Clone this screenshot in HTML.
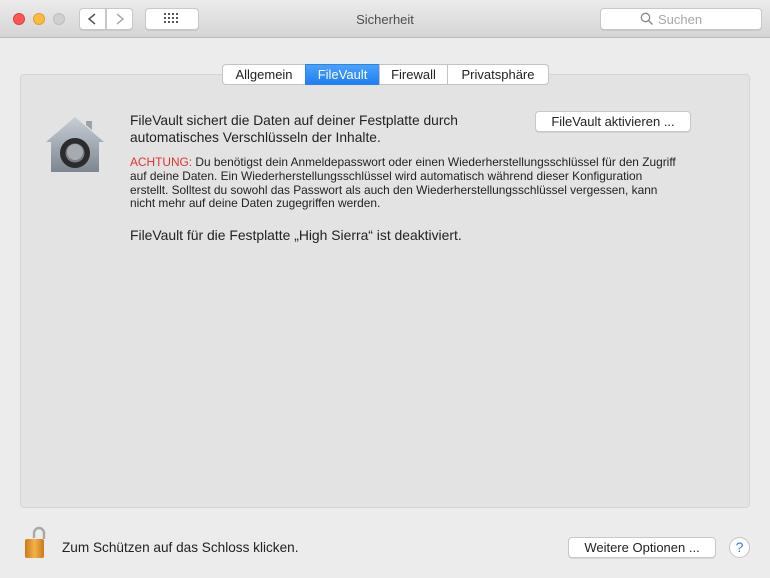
<!DOCTYPE html>
<html><head><style>
*{margin:0;padding:0;box-sizing:border-box}
body{width:770px;height:578px;background:#ececec;font-family:"Liberation Sans",Arial,sans-serif;color:#222;position:relative;overflow:hidden}
.abs{position:absolute}
.tb{left:0;top:0;width:770px;height:38px;background:linear-gradient(#ebebeb,#d5d5d5);border-bottom:1px solid #b9b9b9}
.dot{width:12px;height:12px;border-radius:50%;top:13px}
.btn{background:#fff;border:1px solid #c8c8c8;border-radius:4px;box-shadow:0 1px 0 rgba(0,0,0,.08)}
.tab{top:64px;height:21px;font-size:13px;line-height:19px;text-align:center;background:#fff;border:1px solid #c3c3c3;border-right:none}
</style></head><body>
<div class="abs tb"></div>
<div class="abs dot" style="left:13px;background:#fc5753;border:1px solid #df3e3a"></div>
<div class="abs dot" style="left:33px;background:#fdbc40;border:1px solid #de9f2a"></div>
<div class="abs dot" style="left:53px;background:#d0d0d0;border:1px solid #bcbcbc"></div>
<div class="abs btn" style="left:79px;top:8px;width:27px;height:22px;border-radius:4px 0 0 4px"></div>
<div class="abs btn" style="left:106px;top:8px;width:27px;height:22px;border-radius:0 4px 4px 0"></div>
<svg class="abs" style="left:79px;top:8px" width="54" height="22"><path d="M16 6 L10 11 L16 16" stroke="#555" stroke-width="1.5" fill="none"/><path d="M38 6 L44 11 L38 16" stroke="#aaa" stroke-width="1.5" fill="none"/></svg>
<div class="abs btn" style="left:145px;top:8px;width:54px;height:22px"></div>
<svg class="abs" style="left:164px;top:13px" width="16" height="12" fill="#555"><g><rect x="0" y="0" width="2" height="2"/><rect x="4" y="0" width="2" height="2"/><rect x="8" y="0" width="2" height="2"/><rect x="12" y="0" width="2" height="2"/><rect x="0" y="4" width="2" height="2"/><rect x="4" y="4" width="2" height="2"/><rect x="8" y="4" width="2" height="2"/><rect x="12" y="4" width="2" height="2"/><rect x="0" y="8" width="2" height="2"/><rect x="4" y="8" width="2" height="2"/><rect x="8" y="8" width="2" height="2"/><rect x="12" y="8" width="2" height="2"/></g></svg>
<div class="abs" style="left:0;width:770px;top:12px;text-align:center;font-size:13px;color:#4d4d4d">Sicherheit</div>
<div class="abs btn" style="left:600px;top:8px;width:162px;height:22px;border-radius:4px"></div>
<svg class="abs" style="left:640px;top:12px" width="14" height="14"><circle cx="5.5" cy="5.5" r="4.2" stroke="#888" stroke-width="1.3" fill="none"/><path d="M8.5 8.5 L12.5 12.5" stroke="#888" stroke-width="1.4"/></svg>
<div class="abs" style="left:658px;top:12px;font-size:13px;color:#a8a8a8">Suchen</div>

<div class="abs" style="left:20px;top:74px;width:730px;height:434px;background:#e3e3e3;border:1px solid #d5d5d5;border-radius:4px"></div>

<div class="abs tab" style="left:222px;width:83px;border-radius:4px 0 0 4px">Allgemein</div>
<div class="abs tab" style="left:305px;width:74px;background:linear-gradient(#4aa2fc,#1e7ff5);color:#fff;border-color:#2a82f0">FileVault</div>
<div class="abs tab" style="left:379px;width:68px">Firewall</div>
<div class="abs tab" style="left:447px;width:102px;border-right:1px solid #c3c3c3;border-radius:0 4px 4px 0">Privatsphäre</div>

<svg class="abs" style="left:46px;top:116px" width="60" height="58">
<defs><linearGradient id="h" x1="0" y1="0" x2="0" y2="1"><stop offset="0" stop-color="#c7ced6"/><stop offset="1" stop-color="#7e8791"/></linearGradient></defs>
<path d="M29 1 L58 26 L53 26 L53 56 L5 56 L5 26 L0 26 Z" fill="url(#h)"/>
<path d="M40 9 L40 5 L46 5 L46 14 Z" fill="#9aa2ab"/>
<circle cx="29" cy="37" r="15" fill="#2b2b2b"/>
<circle cx="29" cy="37" r="9.5" fill="#7a7f85"/>
<circle cx="29" cy="36" r="8" fill="#a6abb1"/>
</svg>

<div class="abs" style="left:130px;top:112px;font-size:13.8px;line-height:17px;color:#222">FileVault sichert die Daten auf deiner Festplatte durch<br>automatisches Verschlüsseln der Inhalte.</div>
<div class="abs btn" style="left:535px;top:111px;width:156px;height:21px;font-size:13px;line-height:19px;text-align:center">FileVault aktivieren ...</div>

<div class="abs" style="left:130px;top:156px;font-size:11.9px;line-height:13.8px;color:#222;width:620px;white-space:nowrap"><span style="color:#e0342c">ACHTUNG:</span> Du benötigst dein Anmeldepasswort oder einen Wiederherstellungsschlüssel für den Zugriff<br>auf deine Daten. Ein Wiederherstellungsschlüssel wird automatisch während dieser Konfiguration<br>erstellt. Solltest du sowohl das Passwort als auch den Wiederherstellungsschlüssel vergessen, kann<br>nicht mehr auf deine Daten zugegriffen werden.</div>

<div class="abs" style="left:130px;top:227px;font-size:13.9px;color:#222">FileVault für die Festplatte „High Sierra“ ist deaktiviert.</div>

<svg class="abs" style="left:22px;top:526px" width="26" height="34">
<path d="M22 13 L22 7 A5 5 0 0 0 12 7 L12 12" stroke="#a8a8a8" stroke-width="2.4" fill="none"/>
<defs><linearGradient id="l" x1="0" x2="1"><stop offset="0" stop-color="#c97a1a"/><stop offset=".5" stop-color="#f4b24a"/><stop offset="1" stop-color="#c97a1a"/></linearGradient></defs>
<rect x="3" y="13" width="19" height="19" rx="2" fill="url(#l)"/>
</svg>
<div class="abs" style="left:62px;top:540px;font-size:13.6px;color:#222">Zum Schützen auf das Schloss klicken.</div>
<div class="abs btn" style="left:568px;top:537px;width:148px;height:21px;font-size:13px;line-height:19px;text-align:center">Weitere Optionen ...</div>
<div class="abs" style="left:729px;top:537px;width:21px;height:21px;border-radius:50%;background:#fff;border:1px solid #c4c4c4;color:#2f7de1;font-size:14px;line-height:19px;text-align:center">?</div>
</body></html>
